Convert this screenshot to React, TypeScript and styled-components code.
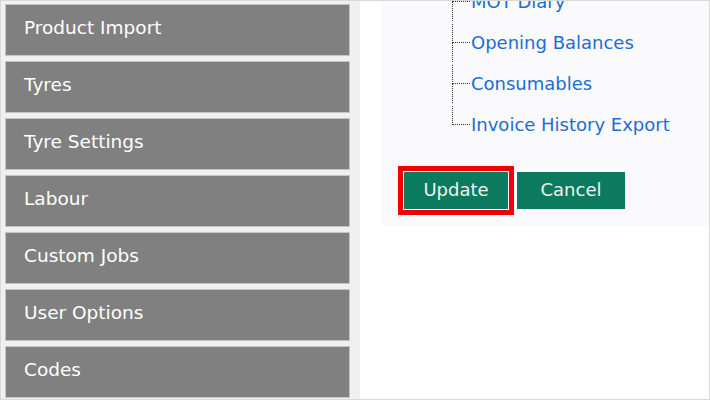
import styled, { createGlobalStyle } from 'styled-components'

const GlobalStyle = createGlobalStyle`
  html, body {
    margin: 0;
    padding: 0;
    background: #ffffff;
  }
  * {
    box-sizing: border-box;
  }
`

const Frame = styled.div`
  width: 710px;
  height: 400px;
  border: 1px solid #d9d9d9;
  display: flex;
  overflow: hidden;
  font-family: 'DejaVu Sans', Verdana, sans-serif;
`

const Sidebar = styled.nav`
  width: 359px;
  flex-shrink: 0;
  background: #f0f0f0;
  padding: 3px 10px 0 4px;
  display: flex;
  flex-direction: column;
  gap: 5px;
`

const MenuButton = styled.div`
  height: 52px;
  flex-shrink: 0;
  background: #808080;
  border: 1px solid #c4c4c4;
  color: #ffffff;
  font-size: 18.5px;
  display: flex;
  align-items: center;
  padding: 0 0 6px 18px;
`

const Main = styled.main`
  flex: 1;
  background: #ffffff;
  padding-left: 21px;
`

const Panel = styled.section`
  background: #fafafc;
  height: 225px;
  overflow: hidden;
  padding: 0 0 0 17px;
`

const Tree = styled.ul`
  list-style: none;
  margin: -20px 0 0 54px;
  padding: 0;
`

const Row = styled.li`
  height: 41px;
  display: flex;
  align-items: stretch;
`

const Connector = styled.div`
  width: 18px;
  display: flex;
  flex-direction: column;
  padding-top: 2px;
`

const Elbow = styled.div`
  height: 19px;
  border-left: 1px dotted #333333;
  border-bottom: 1px dotted #333333;
`

const Tail = styled.div<{ $last?: boolean }>`
  flex: 1;
  margin-bottom: 1px;
  border-left: 1px dotted ${(p) => (p.$last ? 'transparent' : '#333333')};
`

const Link = styled.a`
  color: #1a6dd6;
  font-size: 18px;
  line-height: 41px;
  text-decoration: none;
  white-space: nowrap;
  padding-left: 1px;
`

const Actions = styled.div`
  display: flex;
  align-items: center;
  gap: 3px;
  margin-top: 21px;
`

const Highlight = styled.div`
  border: 5px solid #f00000;
  padding: 1px;
`

const ActionButton = styled.button<{ $width: number }>`
  width: ${(p) => p.$width}px;
  height: 37px;
  background: #0b7a5e;
  border: none;
  color: #eef4f1;
  font-family: 'DejaVu Sans', Verdana, sans-serif;
  font-size: 18px;
  padding: 0 0 2px;
  cursor: pointer;
`

const menu = [
  'Product Import',
  'Tyres',
  'Tyre Settings',
  'Labour',
  'Custom Jobs',
  'User Options',
  'Codes',
]

const links = ['MOT Diary', 'Opening Balances', 'Consumables', 'Invoice History Export']

export default function App() {
  return (
    <>
      <GlobalStyle />
      <Frame>
        <Sidebar>
          {menu.map((item) => (
            <MenuButton key={item}>{item}</MenuButton>
          ))}
        </Sidebar>
        <Main>
          <Panel>
            <Tree>
              {links.map((link, i) => (
                <Row key={link}>
                  <Connector>
                    <Elbow />
                    <Tail $last={i === links.length - 1} />
                  </Connector>
                  <Link href="#">{link}</Link>
                </Row>
              ))}
            </Tree>
            <Actions>
              <Highlight>
                <ActionButton $width={104}>Update</ActionButton>
              </Highlight>
              <ActionButton $width={108}>Cancel</ActionButton>
            </Actions>
          </Panel>
        </Main>
      </Frame>
    </>
  )
}
